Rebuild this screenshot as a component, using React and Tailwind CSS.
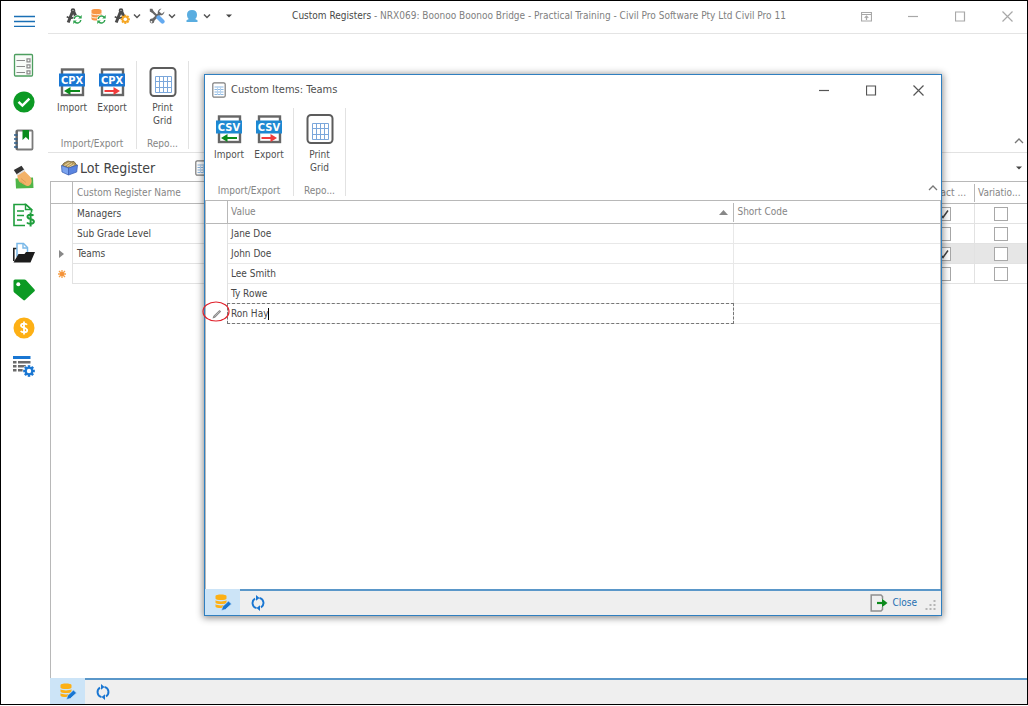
import React from "react";

/* ---------- icons ---------- */

function Chevron({ up = false }) {
  return (
    <svg width="8" height="8" viewBox="0 0 8 8" fill="none" stroke="#555" strokeWidth="1.5" aria-hidden="true">
      <path d={up ? "M1 6 4 3l3 3" : "M1 2.5 4 5.5l3-3"} />
    </svg>
  );
}

function CaretDown() {
  return (
    <svg width="6" height="4" viewBox="0 0 6 4" fill="#444" aria-hidden="true">
      <path d="M0 .5h6L3 3.6z" />
    </svg>
  );
}

function CompassShape() {
  return (
    <g fill="none" stroke="#4a4a4a">
      <circle cx="7" cy="2.6" r="1.4" strokeWidth="1.800" />
      <path d="M6.400 4 2.200 14.500M7.800 4l3.700 8" strokeWidth="3" />
      <path d="M.8 8.700c2.600 2 7 2 9-.7" strokeWidth="1.700" />
    </g>
  );
}

function SyncBadge() {
  return (
    <g>
      <circle cx="11.500" cy="11.500" r="4.500" fill="#fff" />
      <g fill="none" stroke="#2fa34f" strokeWidth="1.500">
        <path d="M8.200 11a3.400 3.400 0 0 1 6-1.800M14.800 12a3.400 3.400 0 0 1-6 1.800" />
      </g>
      <path d="M15.700 7v3.500h-3.500zM7.300 16v-3.500h3.500z" fill="#2fa34f" />
    </g>
  );
}

function GearShape({ cx, cy, r, color, hole }) {
  const teeth = [0, 45, 90, 135, 180, 225, 270, 315];
  return (
    <g>
      {teeth.map((a) => (
        <rect key={a} x={cx - r * 0.22} y={cy - r} width={r * 0.44} height={r} fill={color} transform={`rotate(${a} ${cx} ${cy})`} />
      ))}
      <circle cx={cx} cy={cy} r={r * 0.74} fill={color} />
      <circle cx={cx} cy={cy} r={r * 0.38} fill={hole} />
    </g>
  );
}

function CompassSync() {
  return (
    <svg width="16" height="16" viewBox="0 0 16 16" aria-hidden="true">
      <CompassShape />
      <SyncBadge />
    </svg>
  );
}

function CompassGear() {
  return (
    <svg width="16" height="16" viewBox="0 0 16 16" aria-hidden="true">
      <CompassShape />
      <GearShape cx={11.3} cy={11.3} r={4.6} color="#f5a623" hole="#fff" />
    </svg>
  );
}

function DatabaseSync() {
  return (
    <svg width="16" height="16" viewBox="0 0 16 16" aria-hidden="true">
      <path d="M1.500 2.500C1.500.600 11.500.600 11.500 2.500V11c0 2-10 2-10 0z" fill="#f79646" />
      <path d="M1.500 5.500c1 1.600 9 1.600 10 0M1.500 8.700c1 1.600 9 1.600 10 0" stroke="#fff" strokeWidth=".9" fill="none" />
      <SyncBadge />
    </svg>
  );
}

function Tools() {
  return (
    <svg width="16" height="16" viewBox="0 0 16 16" aria-hidden="true">
      <path d="M2 2.200 9 9" stroke="#666" strokeWidth="2.200" />
      <path d="M.8.8h2.600l1.200 2.600L3.200 4.800.8 3.400z" fill="#666" />
      <path d="M3 13 11.500 4.800" stroke="#666" strokeWidth="2.800" />
      <path d="M15.500 3.600 13 5.800l-2.300-.6-.5-2.200L12.500.500A4 4 0 0 0 8.700 5L11 7.300a4 4 0 0 0 4.500-3.700z" fill="#666" />
      <circle cx="3" cy="13" r="2.400" fill="#666" />
      <circle cx="2.400" cy="13.800" r=".9" fill="#fff" />
      <path d="m9.500 9.500 4 4" stroke="#64aaf0" strokeWidth="4.200" strokeLinecap="round" />
    </svg>
  );
}

function Person() {
  return (
    <svg width="16" height="16" viewBox="0 0 16 16" fill="#5aade0" aria-hidden="true">
      <path d="M8 2c3.300 0 5 2 5 4.800 0 1.800-.6 3.300-1.800 4.200l2.300 1.200V14h-11v-1.800L4.800 11C3.600 10.100 3 8.600 3 6.800 3 4 4.700 2 8 2z" />
    </svg>
  );
}

function Checklist() {
  return (
    <svg width="22" height="24" viewBox="0 0 22 24" fill="none" aria-hidden="true">
      <rect x="1.500" y="1.500" width="18" height="21.500" rx="1" stroke="#4d9e5f" strokeWidth="1.300" fill="#f8fbf8" />
      <g stroke="#8a8a8a" strokeWidth="1.200">
        <path d="M3.500 7.500h8.500M3.500 13.500h8.500M3.500 19.500h8.500" />
        <path d="M14 5.800h3v3h-3zM14 11.800h3v3h-3zM14 17.800h3v3h-3z" />
      </g>
    </svg>
  );
}

function CheckCircle() {
  return (
    <svg width="22" height="22" viewBox="0 0 22 22" aria-hidden="true">
      <circle cx="11" cy="11" r="10.600" fill="#0c9a24" />
      <path d="m5.500 10.800 3.900 3.800 7-6.900" stroke="#fff" strokeWidth="2.500" fill="none" />
    </svg>
  );
}

function Notebook() {
  return (
    <svg width="22" height="22" viewBox="0 0 22 22" fill="none" aria-hidden="true">
      <rect x="3.500" y="1.500" width="16" height="19" rx="1" stroke="#7a7a7a" strokeWidth="1.800" />
      <path d="M3.800 1.500v19" stroke="#666" strokeWidth="2.200" />
      <path d="M1 6h3.500M1 10h3.500M1 14h3.500M1 18h3.500" stroke="#2d5f8c" strokeWidth="1.600" />
      <path d="M9.500 1h6.500v10l-3.200-3-3.300 3z" fill="#0a8c1c" />
    </svg>
  );
}

function CashHand() {
  return (
    <svg width="22" height="24" viewBox="0 0 22 24" aria-hidden="true">
      <path d="m2.500 13.500 17.500-1 .5 10.500-17.500.5z" fill="#4fb548" />
      <path d="M4.500 8.500 11 5.500l5.500 5.500c2.500 2.500 3 6 1 8.500-1.600 1.800-3.800 2-5.200.8L6.500 17c-1.700-2.600-2.500-5.500-2-8.500z" fill="#f3b268" />
      <path d="m8 13.500 5 4M7.500 16.500l4 3" stroke="#d99a55" strokeWidth=".9" fill="none" />
      <path d="M.8 5 8.500.8l2.800 4-7.500 4.700z" fill="#333" />
      <path d="m4 9 7-4.400.9 1.500-7.200 4.300z" fill="#ddd" />
    </svg>
  );
}

function DocDollar() {
  return (
    <svg width="24" height="24" viewBox="0 0 24 24" fill="none" aria-hidden="true">
      <path d="M13 22.500H2V1.500h12l5.500 5v3" stroke="#1f9e3c" strokeWidth="1.600" />
      <path d="M13.500 1.500v5h6z" stroke="#1f9e3c" strokeWidth="1.400" />
      <path d="M5 8h7M5 12.500h7M5 17h5" stroke="#1f9e3c" strokeWidth="1.600" />
      <path d="M21.500 12.600c-1-1.200-6-1.700-6 1.200 0 3 6.400 1.600 6.400 4.700 0 3-5.700 2.700-6.900 1M18.600 9.500v14" stroke="#1f9e3c" strokeWidth="2" />
    </svg>
  );
}

function FolderFile() {
  return (
    <svg width="24" height="22" viewBox="0 0 24 22" aria-hidden="true">
      <path d="M1.800 19V6.500h3" stroke="#222" strokeWidth="1.600" fill="none" />
      <path d="M5 15V1.500h6.500l4 4V12" fill="#fff" stroke="#79b8e8" strokeWidth="1.500" />
      <path d="M11 1.500V6h4.500" fill="none" stroke="#79b8e8" strokeWidth="1.400" />
      <path d="M6.500 12h6l1.500-2H23l-4.500 10.500H1.500z" fill="#1c1c1c" />
    </svg>
  );
}

function Tag() {
  return (
    <svg width="22" height="22" viewBox="0 0 22 22" aria-hidden="true">
      <path d="M.5 2A1.500 1.500 0 0 1 2 .5h9.500c.6 0 1 .2 1.400.6l8.600 9.400c.5.500.5 1.200 0 1.700L12 21c-.5.500-1.200.5-1.700 0L1.200 13.500a2 2 0 0 1-.7-1.400z" fill="#0c9a24" />
      <circle cx="5.300" cy="5.300" r="2" fill="#fff" />
    </svg>
  );
}

function Coin() {
  return (
    <svg width="22" height="22" viewBox="0 0 22 22" aria-hidden="true">
      <circle cx="11" cy="11" r="10.500" fill="#fdb015" />
      <path d="M14 7.800c-1-1.500-6-1.700-6 .8 0 2.700 6.200 1.600 6.200 4.600 0 2.800-5.400 2.600-6.400.7M11 4.500v13" stroke="#fff" strokeWidth="1.800" fill="none" />
    </svg>
  );
}

function ListGear() {
  return (
    <svg width="22" height="22" viewBox="0 0 22 22" aria-hidden="true">
      <path d="M0 2.500h17.500" stroke="#1976d2" strokeWidth="3" />
      <path d="M0 7.300h3.500M5 7.300h12.500M0 11.300h3.500M5 11.300h8M0 15.300h3.500M5 15.300h5" stroke="#6b6b6b" strokeWidth="2.400" />
      <circle cx="16" cy="16" r="6.500" fill="#fff" />
      <GearShape cx={16} cy={16} r={5.8} color="#1976d2" hole="#fff" />
    </svg>
  );
}

function ExchangeIcon({ label, color, direction }) {
  const out = direction === "out";
  const arrow = out ? "#f23b3b" : "#0c8a1c";
  return (
    <svg width="28" height="30" viewBox="0 0 28 30" aria-hidden="true">
      <rect x="4" y="2.500" width="21" height="25.500" fill="#fff" stroke="#666" strokeWidth="2.400" />
      <rect x="1" y="6.500" width="26" height="13" fill={color} />
      <text x="14" y="17" textAnchor="middle" fontFamily="'DejaVu Sans Condensed', 'DejaVu Sans', sans-serif" fontSize="11" fontWeight="bold" fill="#fff">
        {label}
      </text>
      <path d={out ? "M6.500 24h10" : "M22 24H11"} stroke={arrow} strokeWidth="2" />
      <path d={out ? "m22 24-6.500-4v8z" : "M6 24l6.500-4v8z"} fill={arrow} />
    </svg>
  );
}

function PrintGridIcon() {
  return (
    <svg width="28" height="30" viewBox="0 0 28 30" fill="none" aria-hidden="true">
      <rect x="1.500" y="1" width="25" height="28" rx="3.500" stroke="#5c5c5c" strokeWidth="2" />
      <path d="M6.500 9.500h16v16h-16zM10.500 9.500v16M14.500 9.500v16M18.500 9.500v16M6.500 14.500h16M6.500 20.500h16" stroke="#7ba7db" />
    </svg>
  );
}

function SheetIcon() {
  return (
    <svg width="14" height="16" viewBox="0 0 14 16" fill="none" aria-hidden="true">
      <rect x=".8" y=".8" width="12.400" height="14.400" rx="1.500" stroke="#7d7d7d" strokeWidth="1.200" />
      <path d="M2.500 5h9M2.500 7.500h9M2.500 10h9M2.500 12.500h9" stroke="#8db8e2" strokeWidth="1.200" />
      <path d="M5.500 4.500v8.500M8.500 4.500v8.500" stroke="#b9d4ee" />
    </svg>
  );
}

function BoxIcon() {
  return (
    <svg width="17" height="16" viewBox="0 0 17 16" aria-hidden="true">
      <path d="M1 5.500 3 3l4-2 3 .8 3-.3 3 4L8 8z" fill="#b59a5c" stroke="#6b5b35" strokeWidth=".8" />
      <path d="m3.500 5.500 5-3M6 6.500l5-3M8.500 7.200l4.500-2.700" stroke="#efdcae" strokeWidth=".9" />
      <path d="m.5 5.500 7 2.500v7l-6.500-3z" fill="#7ba3ee" stroke="#3f62b5" strokeWidth=".8" />
      <path d="m7.500 8 9-3-.8 7-8.200 3z" fill="#5a84e0" stroke="#3f62b5" strokeWidth=".8" />
    </svg>
  );
}

function DatabaseEdit() {
  return (
    <svg width="18" height="18" viewBox="0 0 18 18" aria-hidden="true">
      <path d="M1.500 3c0-2 11-2 11 0v2.500c0 2-11 2-11 0z" fill="#fdb015" />
      <path d="M1.500 7.300c1.500 1.500 9.500 1.500 11 0v2.200c0 2-11 2-11 0zM1.500 11.300c1.500 1.500 9.500 1.500 11 0v2.200c0 2-11 2-11 0z" fill="#fdb015" />
      <path d="m7.500 17.500 1-3.800 6-5.700 3 3-6.200 5.600z" fill="#1976d2" stroke="#cce4f7" strokeWidth=".7" />
    </svg>
  );
}

function Refresh() {
  return (
    <svg width="16" height="16" viewBox="0 0 16 16" aria-hidden="true">
      <path d="M6.500 13.200A5.300 5.300 0 0 1 5 3.600M9.500 2.800A5.300 5.300 0 0 1 11 12.400" fill="none" stroke="#1976d2" strokeWidth="1.900" />
      <path d="M6 0v5.800l3.500-2.900zM10 16v-5.800L6.500 13.100z" fill="#1976d2" />
    </svg>
  );
}

function ExitIcon() {
  return (
    <svg width="18" height="18" viewBox="0 0 18 18" fill="none" aria-hidden="true">
      <path d="M12.500 5V2.500L11 1H1.200v16H11l1.500-1.500V13" stroke="#8f8f8f" strokeWidth="1.500" />
      <path d="M7 9h7" stroke="#0c8a1c" strokeWidth="2.200" />
      <path d="M12 4.800 17.500 9 12 13.200z" fill="#0c8a1c" />
    </svg>
  );
}

function SizeGrip() {
  return (
    <svg width="12" height="12" viewBox="0 0 12 12" fill="#b5b5b5" aria-hidden="true">
      <path d="M8.500 1h2v2h-2zM8.500 5h2v2h-2zM8.500 9h2v2h-2zM4.500 5h2v2h-2zM4.500 9h2v2h-2zM.5 9h2v2h-2z" />
    </svg>
  );
}

const windowPaths = {
  Minimize: "M0 5.500h10",
  Maximize: "M.5 1h9v9h-9z",
  "Close window": "m.5 .5 10 10M10.500 .5l-10 10",
  "Ribbon display": "M.5 1.500h10v8.500H.5zM.5 3.500h10M5.500 9V5M3.700 6.800l1.800-1.800 1.800 1.800",
};

function WindowButton({ name }) {
  return (
    <button type="button" aria-label={name} className="flex h-7 w-10 items-center justify-center">
      <svg width="11" height="11" viewBox="0 0 11 11" fill="none" stroke="currentColor" strokeWidth="1.200" aria-hidden="true">
        <path d={windowPaths[name]} />
      </svg>
    </button>
  );
}

/* ---------- shared parts ---------- */

function RibbonButton({ icon, children, className }) {
  return (
    <button type="button" className={"flex flex-col items-center gap-1 leading-[13px] text-[#505050] " + className}>
      {icon}
      <span className="w-min">{children}</span>
    </button>
  );
}

function RibbonGroup({ label, className = "", children }) {
  return (
    <section className={"flex h-[88px] flex-col justify-between border-r border-[#e2e2e2] pt-[6px] " + className}>
      <div className="flex items-start">{children}</div>
      <h2 className="text-center leading-[10px] text-[#858585]">{label}</h2>
    </section>
  );
}

function Ribbon({ format, color, className }) {
  return (
    <div className={"flex items-end pl-1 " + className}>
      <RibbonGroup label="Import/Export" className="pr-1">
        <RibbonButton className="w-10" icon={<ExchangeIcon label={format} color={color} direction="in" />}>Import</RibbonButton>
        <RibbonButton className="w-10" icon={<ExchangeIcon label={format} color={color} direction="out" />}>Export</RibbonButton>
      </RibbonGroup>
      <RibbonGroup label="Repo...">
        <RibbonButton className="w-[51px]" icon={<PrintGridIcon />}>Print Grid</RibbonButton>
      </RibbonGroup>
      <button type="button" aria-label="Collapse ribbon" className="ml-auto flex size-4 items-center justify-center">
        <svg width="10" height="6" viewBox="0 0 10 6" fill="none" stroke="#777" strokeWidth="1.300" aria-hidden="true">
          <path d="m1 5 4-4 4 4" />
        </svg>
      </button>
    </div>
  );
}

function StatusBar({ children }) {
  return (
    <footer className="flex h-[26px] shrink-0 bg-[#efefef]">
      <button type="button" aria-label="Edit data" className="flex w-[35px] items-center justify-center bg-[#cce4f7]">
        <DatabaseEdit />
      </button>
      <div className="flex flex-1 items-center border-t-2 border-[#5a97c9]">
        <button type="button" aria-label="Refresh" className="flex w-9 items-center justify-center">
          <Refresh />
        </button>
        {children}
      </div>
    </footer>
  );
}

function TickBox({ checked = false, label }) {
  return (
    <span className="mx-auto grid w-[14px]">
      <input
        type="checkbox"
        aria-label={label}
        defaultChecked={checked}
        className="peer col-start-1 row-start-1 size-[14px] appearance-none border border-[#a8a8a8] bg-white"
      />
      <svg className="pointer-events-none invisible col-start-1 row-start-1 peer-checked:visible" width="14" height="14" viewBox="0 0 14 14" fill="none" stroke="#444" strokeWidth="1.500" aria-hidden="true">
        <path d="m3 7 3 3.500 5-7" />
      </svg>
    </span>
  );
}

/* ---------- main window ---------- */

const sideItems = [
  ["Checklists", Checklist],
  ["Approvals", CheckCircle],
  ["Notebook", Notebook],
  ["Payments", CashHand],
  ["Invoices", DocDollar],
  ["Documents", FolderFile],
  ["Tags", Tag],
  ["Costs", Coin],
  ["Settings", ListGear],
];

function Sidebar() {
  return (
    <nav className="flex w-[46px] shrink-0 flex-col gap-[13px] pt-2">
      <button type="button" aria-label="Menu" className="flex h-6 items-center justify-center">
        <svg width="21" height="12" viewBox="0 0 21 12" stroke="#1a6fb5" strokeWidth="1.300" aria-hidden="true">
          <path d="M0 1.500h21M0 6.500h21M0 11.500h21" />
        </svg>
      </button>
      <ul className="flex h-[338px] flex-col justify-between">
        {sideItems.map(([name, Icon]) => (
          <li key={name}>
            <button type="button" aria-label={name} className="flex h-[37px] w-full items-center justify-center">
              <Icon />
            </button>
          </li>
        ))}
      </ul>
    </nav>
  );
}

function TitleBar() {
  return (
    <header className="flex h-[33px] shrink-0 items-center border-b border-[#e4e4e4] pb-[2px] pl-[18px]">
      <div className="flex items-center gap-2">
        <button type="button" aria-label="Sync lots"><CompassSync /></button>
        <button type="button" aria-label="Sync database"><DatabaseSync /></button>
        <button type="button" aria-label="Lot settings" className="flex items-center gap-[3px]"><CompassGear /><Chevron /></button>
        <button type="button" aria-label="Tools" className="flex items-center gap-[3px]"><Tools /><Chevron /></button>
        <button type="button" aria-label="User" className="flex items-center gap-[3px]"><Person /><Chevron /></button>
        <button type="button" aria-label="Customize toolbar" className="pl-[7px]"><CaretDown /></button>
      </div>
      <h1 className="flex-1 truncate text-center text-[#808080]">
        <span className="text-[#484848]">Custom Registers</span> - NRX069: Boonoo Boonoo Bridge - Practical Training - Civil Pro Software Pty Ltd Civil Pro 11
      </h1>
      <div className="flex gap-[7px] text-[#a8a8a8]">
        <WindowButton name="Ribbon display" />
        <WindowButton name="Minimize" />
        <WindowButton name="Maximize" />
        <WindowButton name="Close window" />
      </div>
    </header>
  );
}

const registers = [
  { name: "Managers", contract: true },
  { name: "Sub Grade Level", contract: false },
  { name: "Teams", contract: true, current: true },
  { name: "", contract: false, blank: true },
];

function RowMarker({ row }) {
  if (row.current) {
    return (
      <svg className="mx-auto" width="5" height="8" viewBox="0 0 5 8" fill="#888" aria-hidden="true">
        <path d="m0 0 5 4-5 4z" />
      </svg>
    );
  }
  if (row.blank) {
    return (
      <svg className="mx-auto" width="10" height="10" viewBox="0 0 10 10" stroke="#f5a04a" strokeWidth="1.300" aria-hidden="true">
        <path d="M5 1v8M1 5h8M2 2l6 6M8 2 2 8" />
        <circle cx="5" cy="5" r="2" fill="#f5923a" stroke="none" />
      </svg>
    );
  }
  return null;
}

function RegisterTable() {
  const head = "h-[22px] border-b border-[#b8b8b8] p-0 font-normal";
  const cell = "h-5 border-b border-[#e2e2e2] p-0 ";
  return (
    <table className="w-full table-fixed border-separate border-spacing-0 text-left">
      <colgroup>
        <col className="w-[22px]" />
        <col className="w-[160px]" />
        <col />
        <col className="w-[62px]" />
        <col className="w-[52px]" />
      </colgroup>
      <thead className="text-[#858585]">
        <tr>
          <th className={head + " border-r"} aria-label="Row state" />
          <th className={head}><div className="pl-1">Custom Register Name</div></th>
          <th className={head} aria-label="Description" />
          <th className={head}><div className="flex h-[18px] items-center justify-end whitespace-nowrap border-r border-[#b8b8b8] pr-2">Contract ...</div></th>
          <th className={head}><div className="whitespace-nowrap pl-[3px]">Variatio...</div></th>
        </tr>
      </thead>
      <tbody className="text-[#484848]">
        {registers.map((row) => (
          <tr key={row.name || "new"} className={row.current ? "bg-[#e6e6e6]" : ""}>
            <td className="h-5 border-r border-[#e2e2e2] bg-white p-0"><RowMarker row={row} /></td>
            <td className={cell + "bg-white"}><div className="pl-1">{row.name}</div></td>
            <td className={cell} />
            <td className={cell + "border-r"}><TickBox checked={row.contract} label={"Contract, " + (row.name || "new row")} /></td>
            <td className={cell}><TickBox label={"Variation, " + (row.name || "new row")} /></td>
          </tr>
        ))}
      </tbody>
    </table>
  );
}

/* ---------- dialog ---------- */

const values = ["Jane Doe", "John Doe", "Lee Smith", "Ty Rowe"];

function EditMarker() {
  return (
    <div className="relative flex h-[19px] items-center justify-center">
      <svg width="10" height="10" viewBox="0 0 10 10" aria-hidden="true">
        <path d="M.5 9.500 1.300 7 7.500 1l1.700 1.600L3 8.700z" fill="#8a8a8a" />
        <path d="m2.500 7.500 5-5" stroke="#c9c9c9" strokeWidth=".7" />
      </svg>
      <svg className="absolute -left-1 -top-1 max-w-none" width="28" height="21" viewBox="0 0 28 21" fill="none" aria-hidden="true">
        <ellipse cx="14" cy="10.500" rx="13" ry="9.500" stroke="#e0202a" strokeWidth="1.200" />
      </svg>
    </div>
  );
}

function ItemsTable() {
  const head = "h-[23px] border-b border-[#b8b8b8] p-0 font-normal";
  const cell = "h-5 border-b border-[#e8e8e8] p-0 ";
  return (
    <table className="w-full table-fixed border-separate border-spacing-0 text-left">
      <colgroup>
        <col className="w-[22px]" />
        <col className="w-[69%]" />
        <col />
      </colgroup>
      <thead className="text-[#858585]">
        <tr>
          <th className={head + " border-r"} aria-label="Row state" />
          <th className={head} aria-sort="ascending">
            <div className="flex h-[19px] items-center justify-between border-r border-[#b8b8b8] pl-[3px] pr-[5px]">
              Value
              <svg width="9" height="5" viewBox="0 0 9 5" fill="#888" aria-hidden="true"><path d="M4.500 0 9 5H0z" /></svg>
            </div>
          </th>
          <th className={head}><div className="pl-[3px]">Short Code</div></th>
        </tr>
      </thead>
      <tbody className="text-[#484848]">
        {values.map((v) => (
          <tr key={v}>
            <td className="h-5 border-r border-[#e2e2e2] p-0" />
            <td className={cell + "border-r"}><div className="pl-[3px]">{v}</div></td>
            <td className={cell} />
          </tr>
        ))}
        <tr>
          <td className="h-5 border-r border-[#e2e2e2] p-0"><EditMarker /></td>
          <td className={cell + "border-r"}>
            <div className="flex h-[19px] items-center pl-[3px] outline-1 outline-dashed outline-[#777]">
              <input aria-label="Value" defaultValue="Ron Hay" className="field-sizing-content bg-transparent p-0 outline-none" />
              <span className="h-3 w-px bg-black" />
            </div>
          </td>
          <td className={cell} />
        </tr>
      </tbody>
    </table>
  );
}

function ItemsDialog() {
  return (
    <div
      role="dialog"
      aria-label="Custom Items: Teams"
      className="absolute bottom-[88px] left-[203px] right-[85px] top-[73px] flex flex-col border border-[#2f7fc0] bg-white shadow-[0_1px_7px_1px_rgba(0,0,0,0.45)]"
    >
      <header className="flex h-8 shrink-0 items-center pb-[2px] pl-[7px] pr-[3px]">
        <SheetIcon />
        <h2 className="flex-1 pl-[5px] text-[11px] text-[#505050]">Custom Items: Teams</h2>
        <div className="flex gap-[7px] text-[#555]">
          <WindowButton name="Minimize" />
          <WindowButton name="Maximize" />
          <WindowButton name="Close window" />
        </div>
      </header>
      <Ribbon format="CSV" color="#1e88d2" className="pb-1 pt-px" />
      <div className="flex-1 border-x border-t border-[#b8b8b8]">
        <ItemsTable />
      </div>
      <StatusBar>
        <button type="button" className="ml-auto flex items-center gap-1 text-[#1f6fb2]">
          <ExitIcon />
          Close
        </button>
        <span className="pl-2 pr-1 pt-1"><SizeGrip /></span>
      </StatusBar>
    </div>
  );
}

export default function App() {
  return (
    <div className="flex min-h-screen flex-col bg-white pb-px font-['DejaVu_Sans_Condensed','DejaVu_Sans',sans-serif] text-[10px] leading-[14px]">
      <div className="relative flex flex-1 border border-black">
        <Sidebar />
        <main className="flex min-w-0 flex-1 flex-col pl-px">
          <TitleBar />
          <Ribbon format="CPX" color="#1976d2" className="border-b border-[#e2e2e2] pb-[3px] pt-[27px]" />
          <div className="flex h-7 shrink-0 items-center gap-[2px] pl-[13px] pr-[5px] pt-[2px]">
            <BoxIcon />
            <h2 className="text-[14px] leading-5 text-[#444]">Lot Register</h2>
            <span className="flex-1 pl-[38px]"><SheetIcon /></span>
            <button type="button" aria-label="More"><CaretDown /></button>
          </div>
          <div className="ml-[2px] flex-1 border-l border-t border-[#b8b8b8]">
            <RegisterTable />
          </div>
          <div className="pl-[2px]">
            <StatusBar />
          </div>
        </main>
        <ItemsDialog />
      </div>
    </div>
  );
}
